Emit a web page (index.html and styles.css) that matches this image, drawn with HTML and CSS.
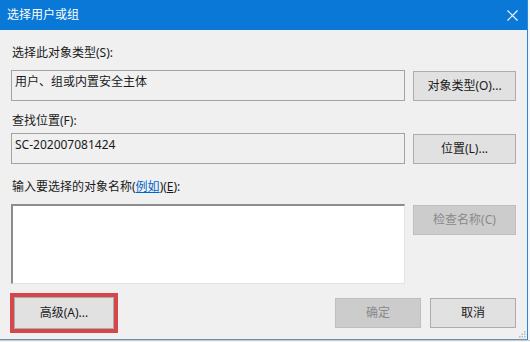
FILE: index.html
```html
<!DOCTYPE html>
<html lang="zh-CN">
<head>
<meta charset="utf-8">
<title>选择用户或组</title>
<link rel="stylesheet" href="styles.css">
</head>
<body>
<div class="screen">
  <div class="window">
    <div class="titlebar">
      <span class="title">选择用户或组</span>
      <svg class="close" width="11" height="11" viewBox="0 0 11 11"><path d="M0.5 0.5 L10.5 10.5 M10.5 0.5 L0.5 10.5" stroke="#ffffff" stroke-width="1.1" fill="none"/></svg>
    </div>
    <div class="content">
      <div class="label label-first">选择此对象类型(S):</div>
      <div class="row">
        <div class="field">用户、组或内置安全主体</div>
        <button class="btn side">对象类型(O)...</button>
      </div>
      <div class="label label-second">查找位置(F):</div>
      <div class="row">
        <div class="field">SC-202007081424</div>
        <button class="btn side">位置(L)...</button>
      </div>
      <div class="label label-third">输入要选择的对象名称(<span class="link">例如</span>)(<u>E</u>):</div>
      <div class="row">
        <div class="textarea"></div>
        <button class="btn side disabled">检查名称(C)</button>
      </div>
      <div class="footer">
        <div class="highlight"><button class="btn advanced">高级(A)...</button></div>
        <div class="actions">
          <button class="btn action disabled">确定</button>
          <button class="btn action">取消</button>
        </div>
      </div>
    </div>
    <svg class="grip" width="7" height="7" viewBox="0 0 7 7">
      <rect x="5" y="0" width="1.5" height="1.5" fill="#b8b8b8"/>
      <rect x="2.5" y="2.5" width="1.5" height="1.5" fill="#b8b8b8"/>
      <rect x="5" y="2.5" width="1.5" height="1.5" fill="#b8b8b8"/>
      <rect x="0" y="5" width="1.5" height="1.5" fill="#b8b8b8"/>
      <rect x="2.5" y="5" width="1.5" height="1.5" fill="#b8b8b8"/>
      <rect x="5" y="5" width="1.5" height="1.5" fill="#b8b8b8"/>
    </svg>
  </div>
  <div class="below"></div>
</div>
</body>
</html>
```
FILE: styles.css
```css
* { box-sizing: border-box; }
html, body { margin: 0; padding: 0; }
body {
  width: 530px;
  height: 342px;
  overflow: hidden;
  background: #f4f7fa;
  font-family: "Noto Sans", "Noto Sans CJK SC", sans-serif;
  font-size: 12px;
  color: #1a1a1a;
}
.screen { width: 530px; height: 342px; }
.window {
  position: relative;
  width: 528px;
  height: 340px;
  background: #f0f0f0;
  border-right: 1px solid #2a86d8;
  border-bottom: 1px solid #6d8fb0;
}
.titlebar {
  height: 30px;
  background: #0a78d6;
  color: #ffffff;
  display: flex;
  align-items: center;
  justify-content: space-between;
  padding: 0 9px 0 7px;
}
.title { line-height: 30px; font-size: 12px; }
.close { display: block; margin-top: 0; }
.content {
  padding: 0 11px 0 11px;
}
.label {
  height: 18px;
  line-height: 18px;
  padding-left: 1px;
  white-space: nowrap;
}
.label-first { margin-top: 14px; margin-bottom: 8px; }
.label-second { margin-top: 11px; margin-bottom: 3px; }
.label-third { margin-top: 14px; margin-bottom: 8px; }
.link { color: #0066cc; text-decoration: underline; }
.row {
  display: grid;
  grid-template-columns: 394px 103px;
  column-gap: 8px;
  align-items: start;
}
.field {
  height: 31px;
  border: 1px solid #a3a3a3;
  background: #f0f0f0;
  padding: 3px 0 0 3px;
  line-height: 16px;
  white-space: nowrap;
}
.textarea {
  height: 80px;
  background: #ffffff;
  border-top: 2px solid #8c8c8c;
  border-left: 2px solid #8c8c8c;
  border-right: 1px solid #e3e3e3;
  border-bottom: 1px solid #e3e3e3;
}
.btn {
  font-family: "Noto Sans", "Noto Sans CJK SC", sans-serif;
  font-size: 12px;
  color: #1a1a1a;
  background: #e1e1e1;
  border: 1px solid #adadad;
  padding: 0;
  margin: 0;
  line-height: 16px;
  text-align: center;
}
.side { height: 30px; width: 103px; margin-top: 1px; }
.disabled {
  background: #cccccc;
  border-color: #bfbfbf;
  color: #8a8a8a;
}
.footer {
  display: flex;
  justify-content: space-between;
  align-items: flex-start;
  margin-top: 9px;
}
.highlight {
  margin-left: -1px;
  border: 4px solid #d6474b;
  width: 108px;
  height: 40px;
}
.advanced {
  width: 100px;
  height: 32px;
  display: block;
}
.actions {
  display: flex;
  gap: 9px;
  margin-top: 5px;
}
.action { width: 86px; height: 30px; }
.grip {
  position: absolute;
  right: 1px;
  bottom: 1px;
  display: block;
}
.below {
  height: 1px;
  background: #c2cad3;
}
```
